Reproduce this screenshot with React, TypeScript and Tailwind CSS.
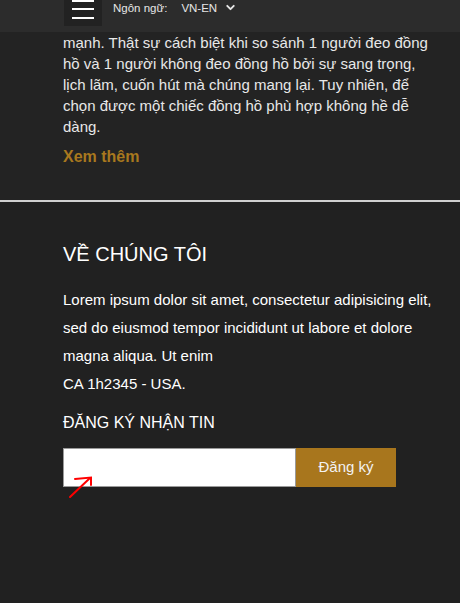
import { ChevronDown } from "lucide-react";

export default function App() {
  return (
    <div className="min-h-[603px] w-[460px] bg-[#212121] font-['Liberation_Sans',Arial,sans-serif] text-white">
      {/* Top bar */}
      <div className="flex h-[33px] items-start bg-[#2c2c2c] pl-[64px]">
        <div className="flex h-[26px] w-[38px] flex-col items-center gap-[6px] bg-[#222222] pt-0">
          <span className="block h-[2px] w-[22px] bg-white" />
          <span className="block h-[2px] w-[22px] bg-white" />
          <span className="mt-[1px] block h-[2px] w-[22px] bg-white" />
        </div>
        <div className="ml-[11px] mt-[1px] flex h-[16px] items-center text-[11.5px] text-[#e6e6e6]">
          <span>Ngôn ngữ:</span>
          <span className="ml-[14px]">VN-EN</span>
          <ChevronDown size={13} strokeWidth={3.5} className="ml-[7px] -mt-[4px]" />
        </div>
      </div>

      {/* Article excerpt */}
      <div className="bg-[#232323] pb-[33px] pl-[63px] pr-[20px]">
        <p className="-mt-[1px] text-[15px] leading-[21px] text-[#e8e8e8]">
          mạnh. Thật sự cách biệt khi so sánh 1 người đeo đồng hồ và 1 người không đeo đồng hồ bởi sự sang trọng,
          lịch lãm, cuốn hút mà chúng mang lại. Tuy nhiên, để chọn được một chiếc đồng hồ phù hợp không hề dễ dàng.
        </p>
        <a href="#" className="mt-[9px] block text-[16px] font-bold leading-[21px] text-[#a8781e]">
          Xem thêm
        </a>
      </div>

      <div className="h-[2px] bg-[#d0d0d0]" />

      {/* About */}
      <div className="pl-[63px] pr-[20px] pt-[40px] pb-[100px]">
        <h2 className="text-[20px] leading-[24px]">VỀ CHÚNG TÔI</h2>
        <p className="mt-[20px] text-[15px] leading-[28px]">
          Lorem ipsum dolor sit amet, consectetur adipisicing elit, sed do eiusmod tempor incididunt ut labore et
          dolore magna aliqua. Ut enim
          <br />
          CA 1h2345 - USA.
        </p>
        <h3 className="mt-[15px] text-[16px] leading-[20px]">ĐĂNG KÝ NHẬN TIN</h3>
        <div className="relative mt-[15px] flex h-[39px] w-[333px]">
          <input
            type="text"
            className="h-full w-[233px] border border-[#9a9a9a] bg-white px-2 text-black outline-none"
          />
          <button className="h-full w-[100px] bg-[#a8761d] text-[15px] text-[#f2f2f2]">Đăng ký</button>
          <svg
            className="absolute left-[5px] top-[26px]"
            width="30"
            height="26"
            viewBox="0 0 30 26"
            fill="none"
            stroke="#ff0000"
            strokeWidth="2"
            strokeLinecap="round"
          >
            <path d="M2 23 L22 4" />
            <path d="M7 5 L23 3.5 L23 11" />
          </svg>
        </div>
      </div>
    </div>
  );
}
